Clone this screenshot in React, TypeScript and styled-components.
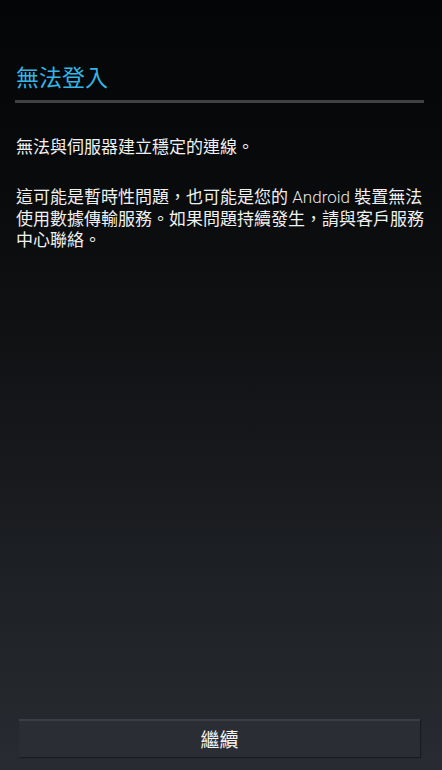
import React from "react";
import styled, { createGlobalStyle } from "styled-components";

const GlobalStyle = createGlobalStyle`
  html, body {
    margin: 0;
    padding: 0;
    height: 100%;
    background: #050607;
  }
  #root {
    min-height: 100%;
  }
  * { box-sizing: border-box; }
`;

const Screen = styled.div`
  width: 100%;
  height: 770px;
  display: flex;
  flex-direction: column;
  background: linear-gradient(
    to bottom,
    #040506 0%,
    #07090a 20%,
    #101214 45%,
    #1c1f23 72%,
    #282c32 100%
  );
  font-family: "Roboto", "Noto Sans CJK TC", sans-serif;
  color: #f0f0f0;
`;

const Header = styled.header`
  padding: 67px 18px 0 15px;
  display: flex;
  flex-direction: column;
`;

const Title = styled.h1`
  margin: 0 0 10px 1px;
  font-size: 23px;
  line-height: 23px;
  font-weight: 400;
  color: #33b5e5;
`;

const Divider = styled.div`
  height: 3px;
  background: #414141;
`;

const Body = styled.main`
  flex: 1;
  padding: 33px 10px 0 16px;
`;

const Paragraph = styled.p<{ $gap?: number }>`
  margin: 0 0 ${(p) => p.$gap ?? 0}px 0;
  font-size: 17px;
  line-height: 20.3px;
  font-weight: 400;
`;

const Stop = styled.span`
  font-family: "Noto Sans CJK JP", sans-serif;
`;

const Latin = styled.span`
  font-family: "Roboto", sans-serif;
  font-weight: 300;
  color: #e6e6e6;
`;

const Footer = styled.footer`
  padding: 0 22px 13px 19px;
`;

const Button = styled.button`
  width: 100%;
  height: 38px;
  border: none;
  border-top: 2px solid #3a3f45;
  background: #2a2e34;
  box-shadow: 1px 1px 1px rgba(0, 0, 0, 0.35);
  color: #f4f4f4;
  font-family: "Noto Sans CJK TC", sans-serif;
  font-size: 19px;
  line-height: 36px;
  padding: 0;
  cursor: pointer;
`;

export default function App() {
  return (
    <>
      <GlobalStyle />
      <Screen lang="zh-Hant">
        <Header>
          <Title>無法登入</Title>
          <Divider />
        </Header>
        <Body>
          <Paragraph $gap={30}>
            無法與伺服器建立穩定的連線<Stop>。</Stop>
          </Paragraph>
          <Paragraph>
            這可能是暫時性問題，也可能是您的 <Latin>Android</Latin> 裝置無法使用數據傳輸服務
            <Stop>。</Stop>如果問題持續發生，請與客戶服務中心聯絡<Stop>。</Stop>
          </Paragraph>
        </Body>
        <Footer>
          <Button>繼續</Button>
        </Footer>
      </Screen>
    </>
  );
}
